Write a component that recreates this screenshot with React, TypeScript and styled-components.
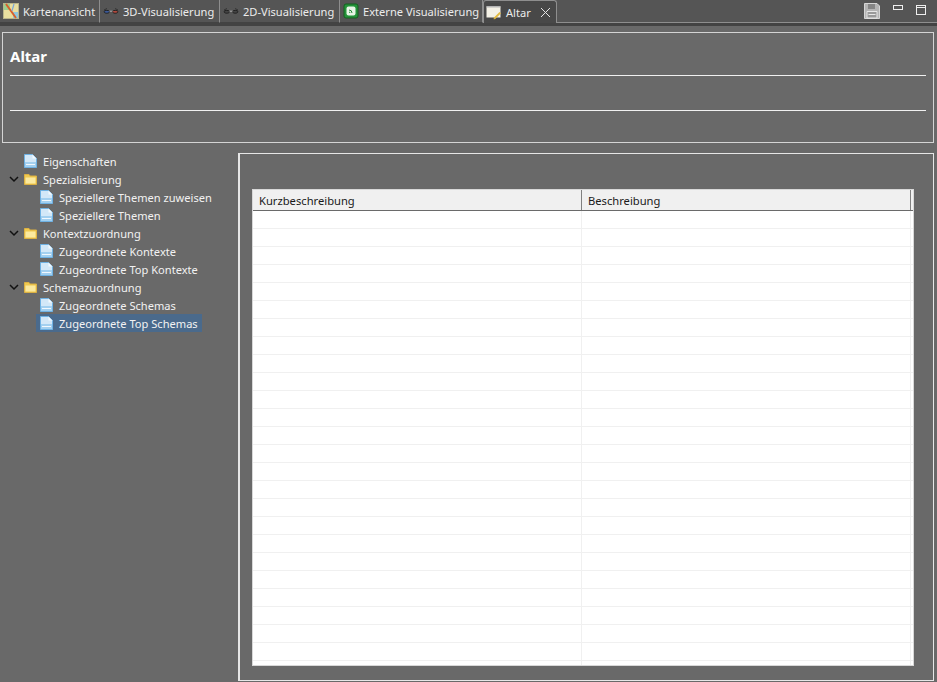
import React from "react";
import styled, { createGlobalStyle } from "styled-components";

const GlobalStyle = createGlobalStyle`
  html, body {
    margin: 0;
    padding: 0;
    background: #696969;
  }
  * {
    box-sizing: border-box;
  }
`;

type TreeEntry = {
  label: string;
  level: number;
  folder?: boolean;
  selected?: boolean;
};

const tree: TreeEntry[] = [
  { label: "Eigenschaften", level: 0 },
  { label: "Spezialisierung", level: 0, folder: true },
  { label: "Speziellere Themen zuweisen", level: 1 },
  { label: "Speziellere Themen", level: 1 },
  { label: "Kontextzuordnung", level: 0, folder: true },
  { label: "Zugeordnete Kontexte", level: 1 },
  { label: "Zugeordnete Top Kontexte", level: 1 },
  { label: "Schemazuordnung", level: 0, folder: true },
  { label: "Zugeordnete Schemas", level: 1 },
  { label: "Zugeordnete Top Schemas", level: 1, selected: true },
];

const MapIcon = () => (
  <svg width="16" height="16" viewBox="0 0 16 16">
    <rect x="0.5" y="0.5" width="15" height="15" fill="#e9dfa0" stroke="#b9b48a" />
    <path d="M1 1h6v6H1z" fill="#9ccf8e" />
    <path d="M10 9h5v6h-5z" fill="#8fc7dd" />
    <path d="M3 1l10 14" stroke="#d8602c" strokeWidth="2" fill="none" />
    <path d="M11 1L9 8" stroke="#7fa8d8" strokeWidth="1.2" fill="none" />
  </svg>
);

const GlassesIcon = ({ left, right }: { left: string; right: string }) => (
  <svg width="16" height="16" viewBox="0 0 16 16">
    <path d="M1 7L4 5.5M15 7L12 5.5" stroke="#2a2a2a" strokeWidth="0.8" fill="none" />
    <path d="M1 8.5C1 7 6.5 7 6.5 8.5C6.5 10.8 1 10.8 1 8.5z" fill={left} stroke="#1c1c1c" strokeWidth="0.9" />
    <path d="M9.5 8.5C9.5 7 15 7 15 8.5C15 10.8 9.5 10.8 9.5 8.5z" fill={right} stroke="#1c1c1c" strokeWidth="0.9" />
    <path d="M6.5 8.2h3" stroke="#c8c8c8" strokeWidth="0.8" />
  </svg>
);

const ExternalIcon = () => (
  <svg width="16" height="16" viewBox="0 0 16 16">
    <rect x="1" y="1" width="14" height="14" rx="2" fill="#24933a" stroke="#14601f" />
    <rect x="3.5" y="3.5" width="9" height="9" rx="2" fill="#e8f5e6" />
    <path d="M6 7a3 3 0 0 1 3 3M6 9a1 1 0 0 1 1 1" stroke="#1f8a35" strokeWidth="1" fill="none" />
  </svg>
);

const NoteIcon = () => (
  <svg width="16" height="16" viewBox="0 0 16 16">
    <path d="M0.5 2.5h14v11h-14z" fill="#f4f1e6" />
    <path d="M0.5 2h14v1.5h-14z" fill="#b5b5b5" />
    <path d="M7.5 14l6-6 1.5 1.2-6 6H7.5z" fill="#e2b93f" />
    <path d="M7.5 14v1.2h1.2z" fill="#333" />
  </svg>
);

const SaveIcon = () => (
  <svg width="16" height="16" viewBox="0 0 16 16">
    <path d="M0.5 0.5h12.5l2.5 2.5v12.5H0.5z" fill="#b4b4b4" stroke="#d6d6d6" />
    <path d="M4 1h7v5H4z" fill="#858585" />
    <path d="M3 8.5h10v6.5H3z" fill="#999" stroke="#e6e6e6" />
    <path d="M4.5 11.5h7" stroke="#e6e6e6" />
  </svg>
);

const MinimizeIcon = () => (
  <svg width="10" height="7" viewBox="0 0 10 7">
    <rect x="0.5" y="2.5" width="9" height="4" fill="none" stroke="#eee" />
  </svg>
);

const MaximizeIcon = () => (
  <svg width="10" height="12" viewBox="0 0 10 12">
    <rect x="0.5" y="2.5" width="9" height="9" fill="none" stroke="#eee" />
    <path d="M0.5 4.5h9" stroke="#eee" />
  </svg>
);

const CloseIcon = () => (
  <svg width="11" height="11" viewBox="0 0 11 11">
    <path d="M1 1l9 9M10 1l-9 9" stroke="#e4e4e4" strokeWidth="1" fill="none" />
  </svg>
);

const PageIcon = () => (
  <svg width="13" height="14" viewBox="0 0 13 14">
    <path d="M0.5 0.5h8l4 4v9h-12z" fill="#d3e8f8" stroke="#6fb2e4" />
    <path d="M8.5 0.5v4h4z" fill="#f4f9fd" />
    <path d="M1 8h11v5H1z" fill="#a3d0f0" />
    <path d="M2 10.5h9" stroke="#f0f8fe" />
  </svg>
);

const FolderIcon = () => (
  <svg width="13" height="11" viewBox="0 0 13 11">
    <path d="M0.5 0.5h4.5l1 1.5h6.5v8.5h-12z" fill="#f0c94f" stroke="#dcb143" />
    <path d="M1.5 3.5h10v6h-10z" fill="#fbe99f" />
  </svg>
);

const Chevron = () => (
  <svg width="10" height="7" viewBox="0 0 10 7">
    <path d="M1 1l4 4 4-4" stroke="#111" strokeWidth="1.5" fill="none" />
  </svg>
);

const App = () => {
  return (
    <Page>
      <GlobalStyle />
      <TabBar>
        <Tab $width={100}>
          <MapIcon />
          Kartenansicht
        </Tab>
        <Tab $width={120}>
          <GlassesIcon left="#3c5a9a" right="#b04a3f" />
          3D-Visualisierung
        </Tab>
        <Tab $width={120}>
          <GlassesIcon left="#444" right="#444" />
          2D-Visualisierung
        </Tab>
        <Tab $width={143}>
          <ExternalIcon />
          Externe Visualisierung
        </Tab>
        <ActiveTab $width={74}>
          <NoteIcon />
          Altar
          <CloseButton>
            <CloseIcon />
          </CloseButton>
        </ActiveTab>
        <TabActions>
          <SaveIcon />
          <MinimizeIcon />
          <MaximizeIcon />
        </TabActions>
      </TabBar>
      <DarkBand />
      <Content>
        <HeaderBox>
          <Title>Altar</Title>
          <Rule />
          <RuleSpacer />
          <Rule />
        </HeaderBox>
        <Split>
          <TreePane>
            {tree.map((entry) => (
              <TreeRow key={entry.label} $level={entry.level}>
                <Twisty>{entry.folder && <Chevron />}</Twisty>
                <TreeItem $selected={entry.selected}>
                  <IconSlot>{entry.folder ? <FolderIcon /> : <PageIcon />}</IconSlot>
                  {entry.label}
                </TreeItem>
              </TreeRow>
            ))}
          </TreePane>
          <DetailPane>
            <TableFrame>
              <TableHead>
                <HeadCell $width={329}>Kurzbeschreibung</HeadCell>
                <HeadCell $width={329}>Beschreibung</HeadCell>
              </TableHead>
              {Array.from({ length: 26 }).map((_, i) => (
                <TableRow key={i}>
                  <BodyCell $width={329} />
                  <BodyCell $width={329} />
                </TableRow>
              ))}
            </TableFrame>
          </DetailPane>
        </Split>
      </Content>
    </Page>
  );
};

const Page = styled.div`
  width: 937px;
  height: 682px;
  overflow: hidden;
  background: #696969;
  font-family: "Noto Sans", "Open Sans", sans-serif;
  font-size: 11.1px;
  color: #f2f2f2;
  display: flex;
  flex-direction: column;
`;

const TabBar = styled.div`
  height: 23px;
  display: flex;
  background: #555555;
`;

const Tab = styled.div<{ $width: number }>`
  width: ${(p) => p.$width}px;
  height: 23px;
  display: flex;
  align-items: center;
  gap: 4px;
  padding-left: 3px;
  border-right: 1px solid #8e8e8e;
  border-bottom: 1px solid #434343;
  white-space: nowrap;
  color: #ececec;
`;

const ActiveTab = styled(Tab)`
  background: #484848;
  border: 1px solid #8e8e8e;
  border-bottom: none;
  border-radius: 3px 3px 0 0;
  padding-left: 2px;
`;

const CloseButton = styled.span`
  display: flex;
  margin-left: 5px;
`;

const TabActions = styled.div`
  flex: 1;
  display: flex;
  justify-content: flex-end;
  align-items: flex-start;
  gap: 13px;
  padding: 3px 11px 0 0;
  border-bottom: 1px solid #8e8e8e;
`;

const DarkBand = styled.div`
  height: 3px;
  background: #434343;
`;

const Content = styled.div`
  flex: 1;
  min-height: 0;
  display: flex;
  flex-direction: column;
  padding: 6px 3px 1px 2px;
`;

const HeaderBox = styled.div`
  height: 111px;
  border: 1px solid #d4d4d4;
  padding: 13px 7px 0;
`;

const Title = styled.div`
  height: 29px;
  line-height: 20px;
  font-size: 15px;
  font-weight: 700;
  color: #ffffff;
`;

const Rule = styled.div`
  height: 1px;
  background: #f0f0f0;
`;

const RuleSpacer = styled.div`
  height: 34px;
`;

const Split = styled.div`
  flex: 1;
  min-height: 0;
  display: flex;
  margin-top: 10px;
`;

const TreePane = styled.div`
  width: 234px;
  margin-top: -1px;
  margin-right: 2px;
  display: flex;
  flex-direction: column;
`;

const TreeRow = styled.div<{ $level: number }>`
  height: 18px;
  display: flex;
  align-items: center;
  padding-left: ${(p) => 5 + p.$level * 16}px;
`;

const Twisty = styled.span`
  width: 13px;
  display: flex;
  justify-content: center;
`;

const TreeItem = styled.div<{ $selected?: boolean }>`
  height: 18px;
  display: flex;
  align-items: center;
  gap: 6px;
  padding: 0 4px 0 4px;
  white-space: nowrap;
  color: #f2f2f2;
  background: ${(p) => (p.$selected ? "#4a6a8c" : "transparent")};
`;

const IconSlot = styled.span`
  width: 13px;
  display: flex;
  justify-content: center;
`;

const DetailPane = styled.div`
  flex: 1;
  border: 1px solid #e6e6e6;
  border-left-width: 2px;
  padding: 35px 19px 13px 12px;
`;

const TableFrame = styled.div`
  height: 477px;
  overflow: hidden;
  background: #ffffff;
  border: 1px solid #d8d8d8;
  color: #1a1a1a;
`;

const TableHead = styled.div`
  height: 21px;
  display: flex;
  background: #f0f0f0;
  border-bottom: 1px solid #6a6a6a;
  font-size: 11.2px;
`;

const HeadCell = styled.div<{ $width: number }>`
  width: ${(p) => p.$width}px;
  padding-left: 6px;
  line-height: 21px;
  border-right: 1px solid #808080;
`;

const TableRow = styled.div`
  height: 18px;
  display: flex;
  border-bottom: 1px solid #f0f0f0;
`;

const BodyCell = styled.div<{ $width: number }>`
  width: ${(p) => p.$width}px;
  border-right: 1px solid #f0f0f0;
`;

export default App;
